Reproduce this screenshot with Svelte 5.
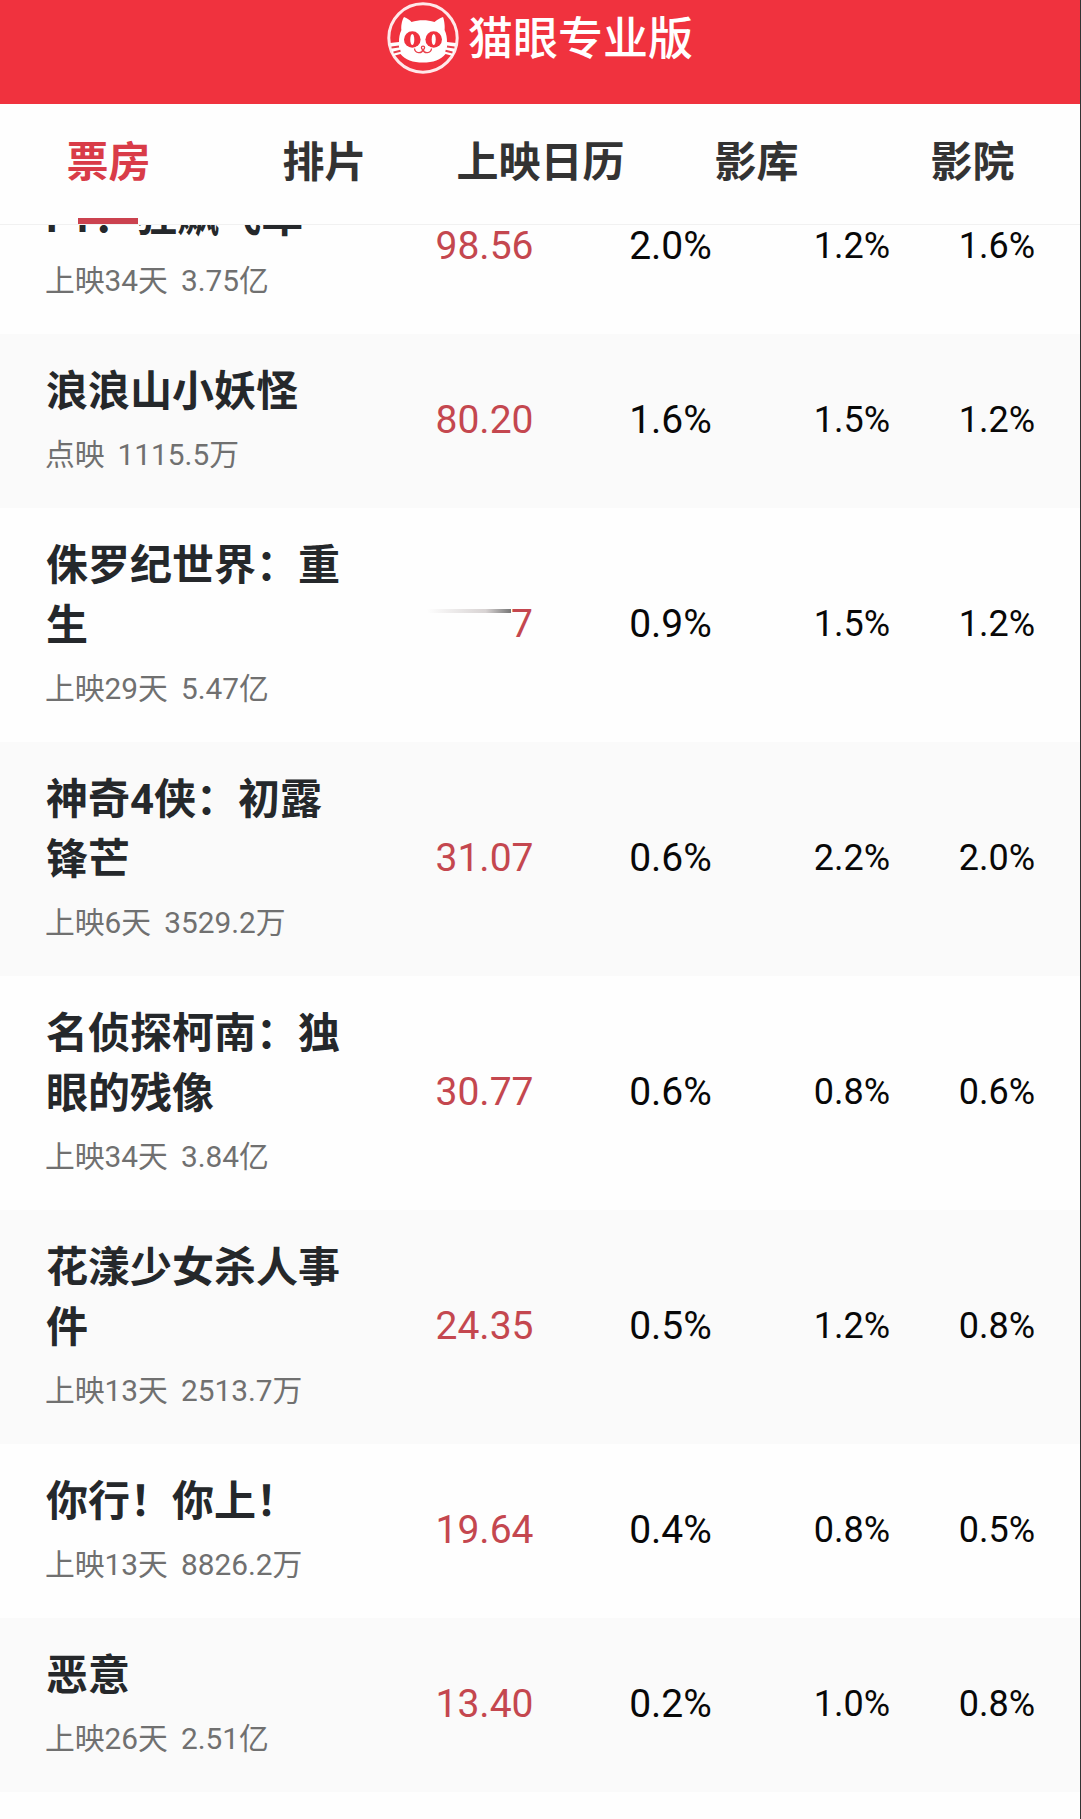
<script>
  const tabs = ['票房', '排片', '上映日历', '影库', '影院'];
  let active = $state('票房');

  const movies = [
    { title: 'F1：狂飙飞车', status: '上映34天', total: '3.75亿', box: '98.56', share: '2.0%', shows: '1.2%', seats: '1.6%' },
    { title: '浪浪山小妖怪', status: '点映', total: '1115.5万', box: '80.20', share: '1.6%', shows: '1.5%', seats: '1.2%' },
    { title: '侏罗纪世界：重生', status: '上映29天', total: '5.47亿', box: '7', fading: true, share: '0.9%', shows: '1.5%', seats: '1.2%' },
    { title: '神奇4侠：初露锋芒', status: '上映6天', total: '3529.2万', box: '31.07', share: '0.6%', shows: '2.2%', seats: '2.0%' },
    { title: '名侦探柯南：独眼的残像', status: '上映34天', total: '3.84亿', box: '30.77', share: '0.6%', shows: '0.8%', seats: '0.6%' },
    { title: '花漾少女杀人事件', status: '上映13天', total: '2513.7万', box: '24.35', share: '0.5%', shows: '1.2%', seats: '0.8%' },
    { title: '你行！你上！', status: '上映13天', total: '8826.2万', box: '19.64', share: '0.4%', shows: '0.8%', seats: '0.5%' },
    { title: '恶意', status: '上映26天', total: '2.51亿', box: '13.40', share: '0.2%', shows: '1.0%', seats: '0.8%' },
  ];
</script>

<div class="page">
  <header>
    <svg class="logo" viewBox="0 0 74 76">
      <circle cx="37" cy="38" r="34.2" fill="none" stroke="#ffe9ea" stroke-width="3" />
      <path class="face" d="M18 17 C21 18 24 20 25.500 22 C33 19.500 41 19.500 48.500 22 C51 20 53.500 18 57 17 C58.500 21 59 27 58.600 30 C60.500 34 61 38 61 42 L70 43 L67 56 L59.500 54 C55 60 47 62.500 37 62.500 C27 62.500 19 60 14.500 54 L7 56 L4 43 L13 42 C13 38 13.500 34 15.400 30 C15 27 15.500 21 18 17 Z" />
      <circle class="eye" cx="26.3" cy="39.500" r="8.3" />
      <circle class="eye" cx="47.7" cy="39.500" r="8.3" />
      <ellipse cx="26.3" cy="39.500" rx="2" ry="5.5" fill="#fff" />
      <ellipse cx="47.7" cy="39.500" rx="2" ry="5.5" fill="#fff" />
      <path class="line" d="M28.500 48.500 C29 53.500 36 54 37 49.500 C38 54 45 53.500 45.500 48.500" />
      <circle class="line" cx="37" cy="47.800" r="1.6" />
      <path class="line gap" d="M5.500 47.500 L13 46.500 M7.500 52.500 L14.500 50.800 M68.500 47.500 L61 46.500 M66.500 52.500 L59.500 50.800" />
    </svg>
    <span class="brand">猫眼专业版</span>
  </header>

  <nav>
    {#each tabs as tab}
      <button class:active={tab === active} onclick={() => (active = tab)}>{tab}</button>
    {/each}
  </nav>

  <main>
    {#each movies as movie (movie.title)}
      <div class="row">
        <div class="movie">
          <h3>{movie.title}</h3>
          <p><span>{movie.status}</span><span>{movie.total}</span></p>
        </div>
        <div class="box" class:fading={movie.fading}><span>{movie.box}</span></div>
        <div class="share">{movie.share}</div>
        <div class="rate">{movie.shows}</div>
        <div class="rate">{movie.seats}</div>
      </div>
    {/each}
  </main>
</div>

<style>
  :global(body) {
    margin: 0;
    background: #fff;
  }
  .page {
    box-sizing: border-box;
    height: 1819px;
    display: flex;
    flex-direction: column;
    overflow: hidden;
    background: linear-gradient(#333, #333) right / 1px 100% no-repeat #fefefe;
    font-family: Roboto, "Noto Sans CJK SC", sans-serif;
  }
  header {
    flex: none;
    box-sizing: border-box;
    height: 104px;
    margin-right: 1px;
    padding: 0 1px 28px 0;
    display: flex;
    justify-content: center;
    align-items: center;
    gap: 8px;
    background: #f0323e;
    color: #fff;
  }
  .logo {
    width: 74px;
    height: 76px;
  }
  .face {
    fill: #fff;
  }
  .eye {
    fill: #f0323e;
  }
  .line {
    fill: none;
    stroke: #e8404b;
    stroke-width: 1.3;
  }
  .gap {
    stroke-width: 2.2;
  }
  .brand {
    padding-top: 3px;
    font-size: 45px;
    line-height: 76px;
    font-weight: 500;
  }
  nav {
    flex: none;
    box-sizing: border-box;
    height: 121px;
    display: grid;
    grid-template-columns: repeat(5, 1fr);
    border-bottom: 1px solid #f1f1f1;
    margin-right: 1px;
  }
  button {
    position: relative;
    padding: 0 0 11px 1px;
    border: 0;
    background: none;
    color: #333;
    font: bold 42px Roboto, "Noto Sans CJK SC", sans-serif;
  }
  button.active {
    color: #d93c48;
  }
  button.active::after {
    content: "";
    position: absolute;
    left: 50%;
    bottom: 0;
    width: 60px;
    height: 6px;
    margin-left: -30px;
    background: #cb424f;
  }
  /* the list is scrolled under the tab bar */
  main {
    flex: 1;
    display: flex;
    flex-direction: column;
    justify-content: flex-end;
    margin-right: 1px;
    padding-bottom: 27px;
    overflow: hidden;
  }
  .row {
    flex: none;
    box-sizing: border-box;
    display: grid;
    grid-template-columns: 300px 277px 95px 172px 145px;
    align-items: center;
    padding: 28px 0 31px 46px;
    color: #080808;
  }
  .row:nth-child(even) {
    background: #fafafa;
  }
  h3 {
    margin: 0;
    color: #25282b;
    font-size: 42px;
    line-height: 60px;
  }
  p {
    display: flex;
    gap: 13px;
    margin: 11px 0 0 -1px;
    color: #707070;
    font-size: 29.8px;
    line-height: 44px;
  }
  .box {
    color: #c4474f;
    font-size: 39px;
    text-align: center;
  }
  .box.fading {
    display: flex;
    justify-content: flex-end;
    padding-right: 90px;
  }
  /* previous digits wiping out before the new figure */
  .box.fading::before {
    content: "";
    width: 84px;
    height: 4px;
    margin-top: 8px;
    background: linear-gradient(to right, transparent, #d8d3d3 70%, #777);
  }
  .share {
    font-size: 39px;
    text-align: center;
  }
  .rate {
    font-size: 36px;
    text-align: right;
  }
</style>
